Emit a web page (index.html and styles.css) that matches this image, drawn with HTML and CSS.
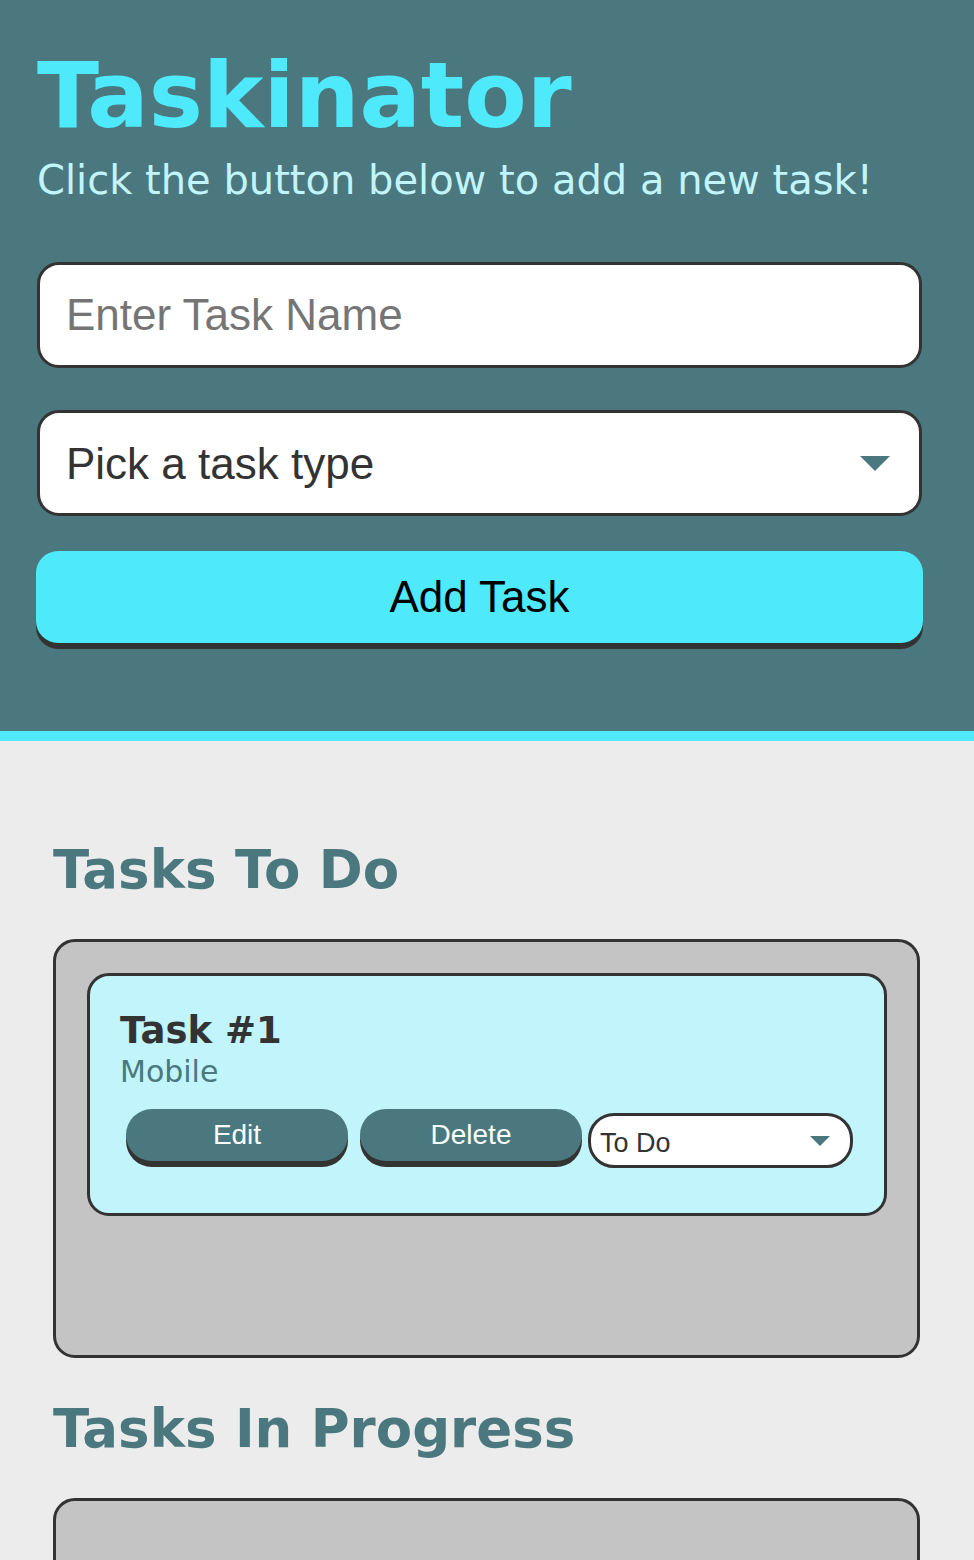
FILE: index.html
```html
<!DOCTYPE html>
<html lang="en">
<head>
<meta charset="utf-8">
<title>Taskinator</title>
<link rel="stylesheet" href="styles.css">
</head>
<body>
<header class="header">
  <h1 class="title">Taskinator</h1>
  <p class="subtitle">Click the button below to add a new task!</p>
  <form class="task-form">
    <input class="text-input" type="text" placeholder="Enter Task Name">
    <div class="select-wrap select-wrap-lg">
      <select class="select-input">
        <option>Pick a task type</option>
        <option>Web</option>
        <option>Mobile</option>
        <option>Print</option>
      </select>
    </div>
    <button class="btn-add" type="button">Add Task</button>
  </form>
</header>
<main class="main">
  <section class="task-section">
    <h2 class="list-title">Tasks To Do</h2>
    <ul class="task-list">
      <li class="task-item">
        <h3 class="task-name">Task #1</h3>
        <span class="task-type">Mobile</span>
        <div class="task-actions">
          <button class="btn-small" type="button">Edit</button>
          <button class="btn-small" type="button">Delete</button>
          <div class="select-wrap select-wrap-sm">
            <select class="select-small">
              <option>To Do</option>
              <option>In Progress</option>
              <option>Completed</option>
            </select>
          </div>
        </div>
      </li>
    </ul>
  </section>
  <section class="task-section">
    <h2 class="list-title">Tasks In Progress</h2>
    <ul class="task-list"></ul>
  </section>
</main>
</body>
</html>
```

FILE: styles.css
```css
* {
  box-sizing: border-box;
}

body {
  margin: 0;
  background: #ececec;
  font-family: "DejaVu Sans", Verdana, sans-serif;
}

.header {
  background: #4a787e;
  border-bottom: 10px solid #4fe9fc;
  padding: 50px 52px 88px 37px;
}

.title {
  margin: 0;
  font-family: "DejaVu Sans", Verdana, sans-serif;
  font-weight: bold;
  font-size: 91px;
  line-height: 91px;
  color: #4fe9fc;
}

.subtitle {
  margin: 19px 0 0;
  font-size: 40px;
  line-height: 40px;
  color: #c1f4fb;
}

.task-form {
  margin-top: 62px;
  display: flex;
  flex-direction: column;
}

.text-input,
.select-input {
  display: block;
  width: 100%;
  height: 106px;
  border: 3px solid #333;
  border-radius: 22px;
  background: #fff;
  padding: 0 26px;
  font-family: "Liberation Sans", Arial, sans-serif;
  font-size: 44px;
  color: #333;
  outline: none;
}

.text-input::placeholder {
  color: #757575;
}

.select-wrap {
  position: relative;
}

.select-wrap-lg {
  margin-top: 42px;
}

.select-input,
.select-small {
  appearance: none;
  -webkit-appearance: none;
}

.select-wrap::after {
  content: "";
  position: absolute;
  top: 50%;
  border-style: solid;
  border-color: #4a787e transparent transparent transparent;
  pointer-events: none;
}

.select-wrap-lg::after {
  right: 32px;
  margin-top: -7px;
  border-width: 15px 15px 0 15px;
}

.btn-add {
  margin-top: 35px;
  width: calc(100% + 2px);
  margin-left: -1px;
  height: 92px;
  border: none;
  border-radius: 22px;
  background: #4fe9fc;
  box-shadow: 0 6px 0 #333;
  font-family: "Liberation Sans", Arial, sans-serif;
  font-size: 44px;
  color: #000;
  cursor: pointer;
}

.main {
  padding: 58px 54px 0 53px;
}

.list-title {
  margin: 40px 0 38px;
  font-size: 53px;
  line-height: 62px;
  font-weight: bold;
  color: #4a787e;
}

.task-list {
  list-style: none;
  margin: 0;
  padding: 31px 30px 31px 31px;
  min-height: 419px;
  background: #c4c4c4;
  border: 3px solid #333;
  border-radius: 22px;
}

.task-item {
  background: #c1f4fb;
  border: 3px solid #333;
  border-radius: 22px;
  padding: 33px 30px 45px 30px;
}

.task-name {
  margin: 0;
  font-size: 37px;
  line-height: 43px;
  font-weight: bold;
  color: #333;
}

.task-type {
  display: block;
  margin-top: 2px;
  font-size: 30px;
  line-height: 36px;
  color: #4a787e;
}

.task-actions {
  display: flex;
  align-items: flex-start;
  margin-top: 19px;
}

.btn-small {
  width: 222px;
  height: 52px;
  margin: 0 6px;
  border: none;
  border-radius: 26px;
  background: #4a787e;
  box-shadow: 0 6px 0 #333;
  font-family: "Liberation Sans", Arial, sans-serif;
  font-size: 28px;
  color: #fff;
  cursor: pointer;
}

.select-wrap-sm {
  margin-top: 4px;
  width: 265px;
}

.select-small {
  display: block;
  width: 100%;
  height: 55px;
  border: 3px solid #333;
  border-radius: 26px;
  background: #fff;
  padding: 4px 9px 0;
  font-family: "Liberation Sans", Arial, sans-serif;
  font-size: 27px;
  color: #333;
  outline: none;
}

.select-wrap-sm::after {
  right: 23px;
  margin-top: -5px;
  border-width: 10px 10px 0 10px;
}
```
